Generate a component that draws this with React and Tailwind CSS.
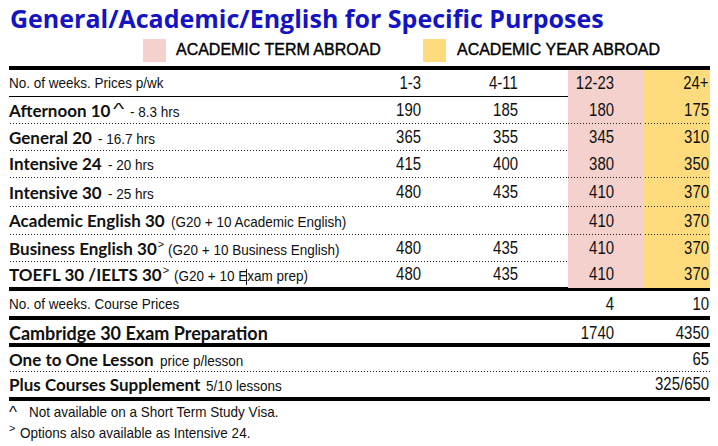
import React from 'react';

// no condensed face installed: Liberation Sans squeezed horizontally
const txt = "font-['Liberation_Sans',sans-serif] inline-block origin-left scale-x-[0.9] whitespace-pre text-[15px]";
const num = "font-['Liberation_Sans',sans-serif] inline-block origin-right scale-x-[0.83] whitespace-nowrap text-[18px]";
const heavy = "font-['Lato',sans-serif] font-bold text-[17px] whitespace-nowrap";
const dots = "bg-[linear-gradient(to_right,#222_1px,transparent_1px)] bg-[length:3px_1px] bg-bottom bg-repeat-x";
const cols = "grid grid-cols-[minmax(0,1fr)_97px_97px_75px_67px]";
const legend = "font-['Liberation_Sans',sans-serif] text-[17px] text-black [-webkit-text-stroke:0.4px_#000] inline-block origin-left scale-x-[0.94] whitespace-nowrap";

const rows = [
  { h: 'h-[27px]', name: 'Afternoon 10', mark: '^', note: '- 8.3 hrs', v: ['190', '185', '180', '175'] },
  { h: 'h-[26px]', name: 'General 20', note: '- 16.7 hrs', v: ['365', '355', '345', '310'] },
  { h: 'h-[28px]', name: 'Intensive 24', note: '- 20 hrs', v: ['415', '400', '380', '350'] },
  { h: 'h-[29px]', name: 'Intensive 30', note: '- 25 hrs', v: ['480', '435', '410', '370'] },
  { h: 'h-[28px]', name: 'Academic English 30', note: '(G20 + 10 Academic English)', v: ['', '', '410', '370'] },
  { h: 'h-[26px]', name: 'Business English 30', mark: '>', note: '(G20 + 10 Business English)', v: ['480', '435', '410', '370'] },
  { h: 'h-[26px]', name: 'TOEFL 30 /IELTS 30', mark: '>', note: 'cursor', v: ['480', '435', '410', '370'], last: true },
];

function Num({ children }) {
  return <span className={num}>{children}</span>;
}

function Label({ name, mark, note }) {
  return (
    <div className="flex items-baseline whitespace-nowrap">
      <span className={heavy}>{name}</span>
      {mark === '^' && (
        <span className="font-['Liberation_Sans',sans-serif] ml-[3px] w-[13px] text-[17px] leading-none relative -top-[2px]">
          <span className="inline-block origin-left scale-x-[1.4]">^</span>
        </span>
      )}
      {mark === '>' && (
        <span className="font-['Liberation_Sans',sans-serif] ml-[1px] text-[11px] leading-none relative -top-[7px]">&gt;</span>
      )}
      {note === 'cursor' ? (
        <span className={`${txt} ml-[5px]`}>
          {'(G20 + 10 E'}
          <span className="inline-block w-px h-[16px] bg-black align-[-4px] -ml-px" />
          {'xam prep)'}
        </span>
      ) : (
        <span className={`${txt} ${mark ? 'ml-[4px]' : 'ml-[6px]'}`}>{note}</span>
      )}
    </div>
  );
}

function PriceRow({ r }) {
  const line = r.last ? '' : dots;
  return (
    <div className={`${cols} ${r.h}`}>
      <div className={`flex items-center ${line}`}>
        <Label name={r.name} mark={r.mark} note={r.note} />
      </div>
      <div className={`flex items-center justify-end pr-[50px] ${line}`}><Num>{r.v[0]}</Num></div>
      <div className={`flex items-center justify-end pr-[50px] ${line}`}><Num>{r.v[1]}</Num></div>
      <div className={`flex items-center justify-end pr-[29px] bg-[#f4d1cc] ${line}`}><Num>{r.v[2]}</Num></div>
      <div className={`flex items-center justify-end pr-[1px] bg-[#fedc7e] ${line}`}><Num>{r.v[3]}</Num></div>
    </div>
  );
}

export default function App() {
  return (
    <div className="w-[718px] h-[446px] bg-white overflow-hidden text-[#111]">
      <h1 className="pl-[10px] h-[34px] font-['Open_Sans',sans-serif] font-bold text-[25px] leading-[36px] text-[#1414c2] whitespace-nowrap">
        General/Academic/English for Specific Purposes
      </h1>

      <div className="flex items-center h-[32px] pl-[143px]">
        <div className="w-[23px] h-[23px] bg-[#f4d1cc]" />
        <div className="w-[257px] pl-[10px]">
          <span className={legend}>ACADEMIC TERM ABROAD</span>
        </div>
        <div className="w-[23px] h-[23px] bg-[#fedc7e]" />
        <div className="pl-[11px]">
          <span className={legend}>ACADEMIC YEAR ABROAD</span>
        </div>
      </div>

      <div className="ml-[9px] w-[701px]">
        <div className="h-[4px] bg-black" />

        <div className={`${cols} h-[27px] border-b border-black`}>
          <div className="flex items-center"><span className={txt}>No. of weeks. Prices p/wk</span></div>
          <div className="flex items-center justify-end pr-[50px]"><Num>1-3</Num></div>
          <div className="flex items-center justify-end pr-[50px]"><Num>4-11</Num></div>
          <div className="flex items-center justify-end pr-[29px] bg-[#f4d1cc]"><Num>12-23</Num></div>
          <div className="flex items-center justify-end pr-[1px] bg-[#fedc7e]"><Num>24+</Num></div>
        </div>

        {rows.map((r) => (
          <PriceRow key={r.name} r={r} />
        ))}

        <div className="h-[4px] bg-black" />

        <div className={`${cols} h-[25px]`}>
          <div className="flex items-center"><span className={txt}>No. of weeks. Course Prices</span></div>
          <div />
          <div />
          <div className="flex items-center justify-end pr-[29px]"><Num>4</Num></div>
          <div className="flex items-center justify-end pr-[1px]"><Num>10</Num></div>
        </div>

        <div className="h-[4px] bg-black" />

        <div className={`${cols} h-[23px]`}>
          <div className="flex items-center"><span className={`${heavy} text-[18px]`}>Cambridge 30 Exam Preparation</span></div>
          <div />
          <div />
          <div className="flex items-center justify-end pr-[29px]"><Num>1740</Num></div>
          <div className="flex items-center justify-end pr-[1px]"><Num>4350</Num></div>
        </div>

        <div className="h-[4px] bg-black" />

        <div className={`flex items-center justify-between h-[25px] ${dots}`}>
          <div className="flex items-baseline">
            <span className={heavy}>One to One Lesson</span>
            <span className={`${txt} ml-[6px]`}>price p/lesson</span>
          </div>
          <div className="pr-[1px]"><Num>65</Num></div>
        </div>

        <div className="flex items-center justify-between h-[25px]">
          <div className="flex items-baseline">
            <span className={heavy}>Plus Courses Supplement</span>
            <span className={`${txt} ml-[6px]`}>5/10 lessons</span>
          </div>
          <div className="pr-[1px]"><Num>325/650</Num></div>
        </div>

        <div className="h-[4px] bg-black" />

        <div className="leading-[21px]">
          <div className="flex items-baseline">
            <span className="font-['Liberation_Sans',sans-serif] w-[20px] text-[17px] leading-none relative top-[1px]">^</span>
            <span className={txt}>Not available on a Short Term Study Visa.</span>
          </div>
          <div className="flex items-baseline">
            <span className="font-['Liberation_Sans',sans-serif] w-[11px] text-[11px] leading-none relative -top-[6px]">&gt;</span>
            <span className={txt}>Options also available as Intensive 24.</span>
          </div>
        </div>
      </div>
    </div>
  );
}
